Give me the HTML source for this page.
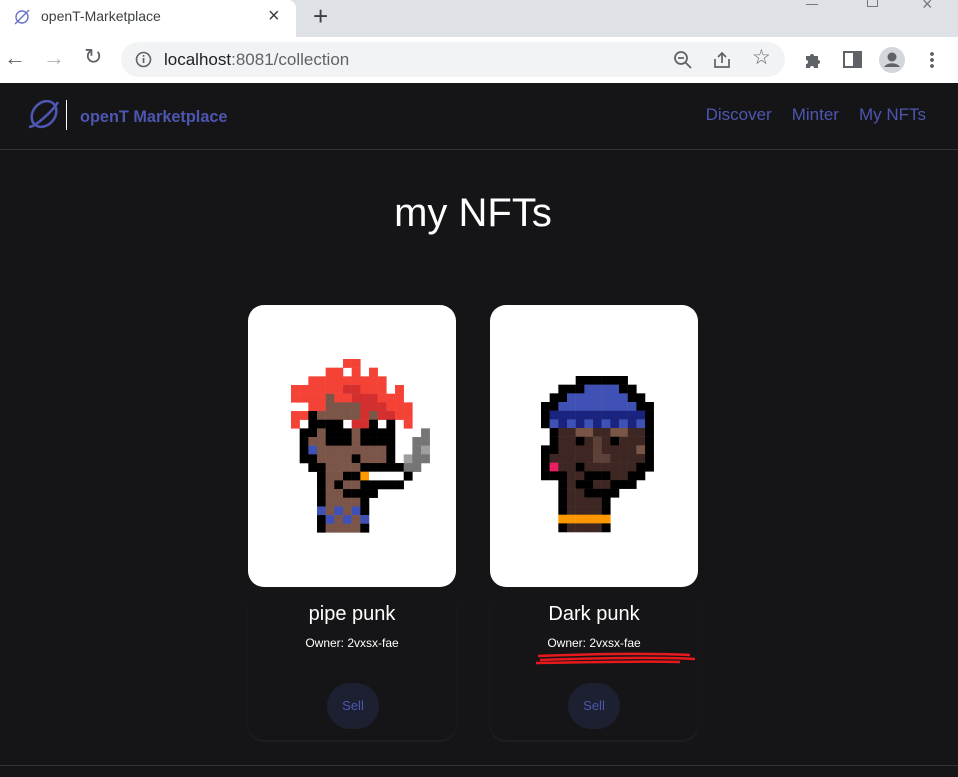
<!DOCTYPE html>
<html><head><meta charset="utf-8"><style>
*{margin:0;padding:0;box-sizing:border-box}
body{width:958px;height:777px;overflow:hidden;background:#151517;font-family:"Liberation Sans",Arial,sans-serif;position:relative}
.tabbar{position:absolute;left:0;top:0;width:958px;height:37px;background:#dee1e6}
.tab{position:absolute;left:0;top:0;width:296px;height:37px;background:#fff;border-top-right-radius:8px}
.tab .t{position:absolute;left:41px;top:8px;font-size:14px;color:#3c4043}
.addr{position:absolute;left:0;top:37px;width:958px;height:46px;background:#fff}
.pill{position:absolute;left:121px;top:5px;width:664px;height:35px;border-radius:18px;background:#f1f3f4}
.url{position:absolute;left:164px;top:13px;font-size:17px;color:#202124}
.url span{color:#5f6368}
.nav{position:absolute;left:0;top:83px;width:958px;height:67px;background:#151517;border-bottom:1px solid #333}
.brand{position:absolute;left:80px;top:25px;font-size:16.3px;font-weight:bold;color:#4d56b0}
.links{position:absolute;right:32px;top:22px;font-size:17px;color:#4d56b0}
.links span{margin-left:20px}
h1{position:absolute;left:0;width:958px;top:191px;text-align:center;color:#fff;font-weight:normal;font-size:40px;padding-right:12px}
.card{position:absolute;top:305px;width:208px;height:282px;background:#fff;border-radius:16px}
.cb{position:absolute;top:600px;width:208px;height:140px;border-radius:0 0 16px 16px;box-shadow:0 2px 2px rgba(255,255,255,.05)}
.name{position:absolute;top:603px;width:208px;text-align:center;color:#fff;font-size:20px}
.own{position:absolute;top:636px;width:208px;text-align:center;color:#fff;font-size:12px}
.sell{position:absolute;top:683px;width:52px;height:46px;border-radius:23px;background:#1c2031;color:#4d56b0;font-size:13px;text-align:center;line-height:46px}
.bot{position:absolute;left:0;top:765px;width:958px;height:1px;background:#333}
</style></head><body>
<div class="tabbar">
 <div class="tab">
  <svg style="position:absolute;left:13px;top:8px" width="18" height="18" viewBox="0 0 18 18"><circle cx="9" cy="9" r="6" fill="none" stroke="#6b72c9" stroke-width="1.4"/><path d="M2 16 L16 2" stroke="#6b72c9" stroke-width="1.4"/></svg>
  <div class="t">openT-Marketplace</div>
  <div style="position:absolute;left:268px;top:5px;font-size:20px;color:#3c4043">×</div>
 </div>
 <div style="position:absolute;left:313px;top:1px;font-size:26px;color:#3c4043">+</div>
 <div style="position:absolute;left:806px;top:4px;width:12px;height:1px;background:#777"></div>
 <div style="position:absolute;left:867px;top:-4px;width:11px;height:11px;border:1px solid #777"></div>
 <div style="position:absolute;left:922px;top:-6px;font-size:18px;color:#777">×</div>
</div>
<div class="addr">
 <div style="position:absolute;left:4px;top:8px;font-size:22px;color:#5f6368">←</div>
 <div style="position:absolute;left:43px;top:8px;font-size:22px;color:#b0b3b8">→</div>
 <div style="position:absolute;left:84px;top:7px;font-size:22px;color:#5f6368">↻</div>
 <div class="pill"></div>
 <svg style="position:absolute;left:135px;top:14px" width="17" height="17"><circle cx="8.5" cy="8.5" r="7" fill="none" stroke="#5f6368" stroke-width="1.6"/><rect x="7.7" y="7" width="1.7" height="5" fill="#5f6368"/><rect x="7.7" y="4" width="1.7" height="1.7" fill="#5f6368"/></svg>
 <div class="url">localhost<span>:8081/collection</span></div>
 <svg style="position:absolute;left:673px;top:13px" width="20" height="20"><circle cx="8" cy="8" r="6" fill="none" stroke="#5f6368" stroke-width="1.8"/><path d="M12.5 12.5L18 18M5 8h6" stroke="#5f6368" stroke-width="1.8"/></svg>
 <svg style="position:absolute;left:712px;top:13px" width="20" height="20"><path d="M3 9v8h14v-8M10 3v10M6 7l4-4 4 4" fill="none" stroke="#5f6368" stroke-width="1.7"/></svg>
 <div style="position:absolute;left:752px;top:8px;font-size:21px;color:#5f6368">☆</div>
 <svg style="position:absolute;left:803px;top:13px" width="20" height="20"><path d="M3 6h4a2 2 0 014 0h4v4a2 2 0 010 4v4H11a2 2 0 00-4 0H3v-4a2 2 0 000-4z" fill="#5f6368"/></svg>
 <svg style="position:absolute;left:843px;top:14px" width="19" height="17"><rect x="1" y="1" width="17" height="15" fill="none" stroke="#5f6368" stroke-width="2"/><rect x="10" y="1" width="8" height="15" fill="#5f6368"/></svg>
 <svg style="position:absolute;left:878px;top:9px" width="28" height="28"><circle cx="14" cy="14" r="13" fill="#d3d6db"/><circle cx="14" cy="11" r="4.5" fill="#5f6368"/><path d="M6 21a9 7 0 0116 0z" fill="#5f6368"/></svg>
 <div style="position:absolute;left:930px;top:14px;width:4px;height:18px;background:radial-gradient(circle,#5f6368 1.8px,transparent 2px) 0 0/4px 6px"></div>
</div>
<div class="nav">
 <svg style="position:absolute;left:25px;top:14px" width="36" height="36" viewBox="0 0 36 36"><ellipse cx="19" cy="17" rx="11" ry="14" transform="rotate(40 19 17)" fill="none" stroke="#4d56b0" stroke-width="2.6"/><path d="M4 30 C10 30 28 14 33 5" fill="none" stroke="#4d56b0" stroke-width="2.6"/></svg>
 <div style="position:absolute;left:66px;top:17px;width:1px;height:30px;background:#fff"></div>
 <div class="brand">openT Marketplace</div>
 <div class="links"><span>Discover</span><span>Minter</span><span>My NFTs</span></div>
</div>
<h1>my NFTs</h1>
<div class="cb" style="left:248px"></div><div class="cb" style="left:490px"></div>
<div class="card" style="left:248px"><svg id="p1" style="position:absolute;left:43px;top:54px" width="150" height="180"></svg></div>
<div class="card" style="left:490px"><svg id="p2" style="position:absolute;left:51px;top:71px" width="130" height="170"></svg></div>
<div class="name" style="left:248px">pipe punk</div>
<div class="name" style="left:490px">Dark punk</div>
<div class="own" style="left:248px">Owner: 2vxsx-fae</div>
<div class="own" style="left:490px">Owner: 2vxsx-fae</div>
<svg style="position:absolute;left:530px;top:650px" width="170" height="20"><path d="M8 6 C60 4 120 3 160 5 M10 10 C70 8 130 7 165 9 M6 13 C60 12 110 11 150 12" stroke="#e8191c" stroke-width="2.5" fill="none"/></svg>
<div class="sell" style="left:327px">Sell</div>
<div class="sell" style="left:568px">Sell</div>
<div class="bot"></div>
<script>
function draw(id,rows,cols){var s=document.getElementById(id),c=8.67,h='';rows.forEach(function(r,y){for(var x=0;x<r.length;x++){var k=r[x];if(cols[k])h+='<rect x="'+(x*c).toFixed(2)+'" y="'+(y*c).toFixed(2)+'" width="8.9" height="8.9" fill="'+cols[k]+'"/>';}});s.innerHTML=h;}
draw('p1',[
"......RR.........",
"....RR.R.R.......",
"..RRRRRRRRR......",
"RRRRRRDDRRR.R....",
"RRRRBRRDDDRRR....",
"..RRBBBBDDDRRR...",
"RRKBBBBBDBDDRR...",
"R.KKKK.DDK.K.R...",
".KKBKKKBKKKK...G.",
".KBBKKKBKKKK..GG.",
".KUBBBBBBBBK..GL.",
".KKBBBBKBBBK.LGG.",
"..KKBBBBKKKKKGG..",
"...KBBKKOWWWWK...",
"...KBKBBKKKKK....",
"...KBBKKKK.......",
"...KBBBBK........",
"...UBUBUK........",
"...KUBUBU........",
"...KBBBBK........"],{R:"#f44336",D:"#d32f2f",B:"#7a5548",K:"#000",W:"#fff",U:"#3f51b5",O:"#ff9800",G:"#757575",L:"#9e9e9e"});
draw('p2',[
"....KKKKKK....",
"..KKKUUUUKK...",
".KKUUUUUUUKK..",
"KKUUUUUUUUUKK.",
"KNNNNNNNNNNNK.",
"KUNUNUNUNUNUK.",
".KDDTTDDTTDDK.",
".KDDKDMDKDDDK.",
"KKDDDDMDDDDTK.",
"KDDDDDMMDDDDK.",
"KPDDKDDDDDDKK.",
"KKKDDKKKDDKK..",
"..KDKKDDKKK...",
"..KDDKKKK.....",
"..KDDDDK......",
"..KDDDDK......",
"..OOOOOO......",
"..KDDDDK......"],{K:"#000",U:"#3f51b5",N:"#1a237e",D:"#3e2723",M:"#5d4037",T:"#795548",P:"#e91e63",O:"#ff9800"});
</script>
</body></html>
